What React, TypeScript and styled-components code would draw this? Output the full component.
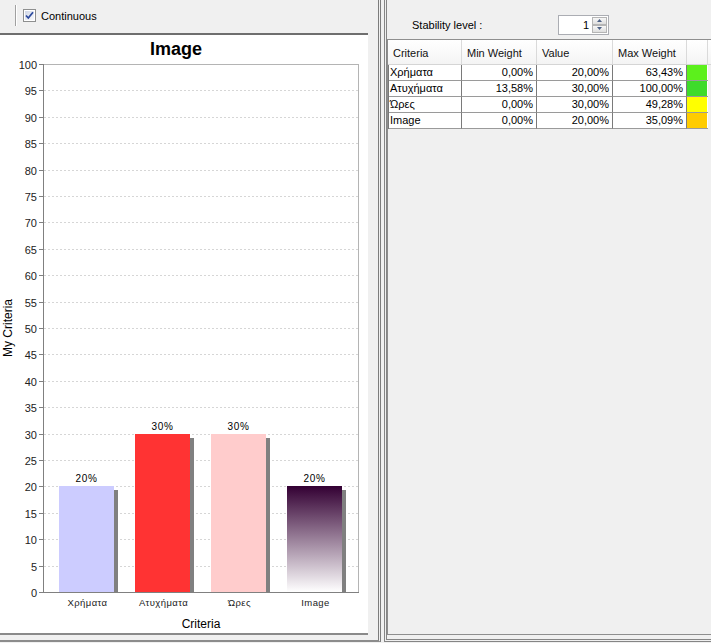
import React from "react";
import styled, { createGlobalStyle } from "styled-components";

const Global = createGlobalStyle`
  html, body { margin: 0; padding: 0; background: #f0f0f0; }
  body { font-family: "Liberation Sans", Arial, sans-serif; font-size: 11px; color: #000; }
  * { box-sizing: border-box; }
`;

const Window = styled.div`
  width: 711px;
  height: 643px;
  display: flex;
  overflow: hidden;
  background: #f0f0f0;
`;

const LeftPane = styled.div`
  width: 381px;
  height: 642px;
  flex: none;
  display: flex;
  flex-direction: column;
  border-right: 3px double #7c7c7c;
  border-bottom: 2px solid #8c8c8c;
  padding-bottom: 5px;
`;

const Toolbar = styled.div`
  height: 33px;
  flex: none;
  display: flex;
  align-items: center;
  padding-left: 15px;
  padding-bottom: 2px;
`;

const Separator = styled.div`
  width: 2px;
  height: 21px;
  border-left: 1px solid #a0a0a0;
  border-right: 1px solid #ffffff;
  margin-right: 6px;
`;

const CheckBox = styled.span`
  width: 13px;
  height: 13px;
  display: inline-block;
  margin-right: 5px;
  line-height: 0;
`;

const CheckLabel = styled.span`
  font-size: 11px;
`;

const ChartRow = styled.div`
  flex: 1;
  display: flex;
  padding-right: 10px;
`;

const ChartPanel = styled.div`
  width: 368px;
  background: #ffffff;
  border-top: 2px solid #6e6e6e;
  border-bottom: 2px solid #8a8a8a;
  line-height: 0;
`;

const RightPane = styled.div`
  width: 340px;
  flex: none;
  height: 642px;
  margin-left: 3px;
  display: flex;
  flex-direction: column;
  border-left: 3px double #858585;
  border-bottom: 3px double #858585;
  padding-bottom: 4px;
`;

const StabilityRow = styled.div`
  height: 39px;
  flex: none;
  display: flex;
  align-items: center;
  padding-top: 10px;
  padding-left: 25px;
`;

const StabilityLabel = styled.span`
  width: 146px;
  font-size: 11px;
`;

const Spinner = styled.div`
  width: 51px;
  height: 20px;
  background: #fff;
  border: 1px solid #abadb3;
  display: flex;
  align-items: stretch;
  padding: 1px 1px 1px 0;
`;

const SpinValue = styled.span`
  flex: 1;
  text-align: right;
  padding-right: 3px;
  line-height: 16px;
  font-size: 11px;
`;

const SpinButtons = styled.div`
  width: 15px;
  display: flex;
  flex-direction: column;
`;

const SpinButton = styled.div`
  flex: 1;
  border: 1px solid #b5b5b5;
  background: linear-gradient(#f7f7f7, #dedede);
  display: flex;
  align-items: center;
  justify-content: center;
  line-height: 0;
`;

const ScrollPane = styled.div`
  flex: 1;
  border: 1px solid #8e8e8e;
  background: #f0f0f0;
`;

const COLS = "74px 75px 76px 74px 21px";

const HeaderRow = styled.div`
  display: grid;
  grid-template-columns: ${COLS} 1fr;
  height: 25px;
  background: linear-gradient(#ffffff, #f4f4f4);
  border-bottom: 1px solid #d5d5d5;
`;

const HeadCell = styled.div`
  display: flex;
  align-items: center;
  padding-left: 5px;
  padding-top: 2px;
  border-right: 1px solid #dadada;
  font-size: 11px;
  color: #111;
`;

const Body = styled.div`
  width: 320px;
  border-left: 1px solid #7a7a7a;
`;

const Row = styled.div`
  display: grid;
  grid-template-columns: 73px 75px 76px 74px 21px;
  height: 16px;
`;

const Cell = styled.div<{ $right?: boolean }>`
  background: #fff;
  border-right: 1px solid #7a7a7a;
  border-bottom: 1px solid #9a9a9a;
  padding: 0 3px 0 1px;
  text-align: ${(p) => (p.$right ? "right" : "left")};
  line-height: 15px;
  font-size: 11px;
  white-space: nowrap;
  overflow: hidden;
`;

const SwatchCell = styled.div`
  background: #fff;
  border-bottom: 1px solid #9a9a9a;
  padding: 0 1px 0 0;
`;

const Swatch = styled.div<{ $color: string }>`
  width: 100%;
  height: 100%;
  background: ${(p) => p.$color};
`;

const rows = [
  { name: "Χρήματα", min: "0,00%", val: "20,00%", max: "63,43%", color: "#5cf01c" },
  { name: "Ατυχήματα", min: "13,58%", val: "30,00%", max: "100,00%", color: "#3edb2b" },
  { name: "Ώρες", min: "0,00%", val: "30,00%", max: "49,28%", color: "#ffff00" },
  { name: "Image", min: "0,00%", val: "20,00%", max: "35,09%", color: "#ffcc00" },
];

const bars = [
  { name: "Χρήματα", value: 20, x: 59, fill: "#ccccff" },
  { name: "Ατυχήματα", value: 30, x: 135, fill: "#ff3333" },
  { name: "Ώρες", value: 30, x: 211, fill: "#ffcccc" },
  { name: "Image", value: 20, x: 287, fill: "url(#imgGrad)" },
];

const PL = 43;
const PR = 358;
const PT = 29;
const PB = 557;
const yOf = (v: number) => PB - v * ((PB - PT) / 100);
const BW = 55;

function Chart() {
  const ticks = Array.from({ length: 21 }, (_, i) => i * 5);
  const ff = "'Liberation Sans', Arial, sans-serif";
  return (
    <svg width={368} height={598} viewBox="0 0 368 598" fontFamily={ff}>
      <defs>
        <linearGradient id="imgGrad" x1="0" y1="0" x2="0" y2="1">
          <stop offset="0" stopColor="#330033" />
          <stop offset="1" stopColor="#ffffff" />
        </linearGradient>
      </defs>
      <text x={176} y={20} textAnchor="middle" fontSize={18} fontWeight="bold" fill="#000">
        Image
      </text>
      {ticks.slice(1, 20).map((v) => (
        <line
          key={"g" + v}
          x1={PL + 1}
          x2={PR}
          y1={Math.round(yOf(v)) + 0.5}
          y2={Math.round(yOf(v)) + 0.5}
          stroke="#d6d6d6"
          strokeDasharray="2 2"
        />
      ))}
      <rect x={PL + 0.5} y={PT + 0.5} width={PR - PL} height={PB - PT} fill="none" stroke="#b4b4b4" />
      {bars.map((b) => {
        const top = Math.round(yOf(b.value));
        return (
          <g key={b.name}>
            <rect x={b.x + 4} y={top + 4} width={BW} height={PB - top - 4} fill="#808080" />
            <rect x={b.x} y={top} width={BW} height={PB - top} fill={b.fill} />
            <text x={b.x + BW / 2} y={top - 4} textAnchor="middle" fontSize={10} fill="#000" letterSpacing={0.6}>
              {b.value}%
            </text>
            <text x={b.x + BW / 2 + 1} y={571} textAnchor="middle" fontSize={9.5} fill="#222" letterSpacing={0.4}>
              {b.name}
            </text>
          </g>
        );
      })}
      <line x1={PL + 0.5} x2={PL + 0.5} y1={PT} y2={PB + 1} stroke="#808080" />
      <line x1={PL} x2={PR + 1} y1={PB + 0.5} y2={PB + 0.5} stroke="#808080" />
      {ticks.map((v) => {
        const y = Math.round(yOf(v)) + 0.5;
        return (
          <g key={"t" + v}>
            <line x1={PL - 4} x2={PL} y1={y} y2={y} stroke="#808080" />
            <text x={37} y={y + 4} textAnchor="end" fontSize={11} fill="#222">
              {v}
            </text>
          </g>
        );
      })}
      <text x={201} y={593} textAnchor="middle" fontSize={12} fill="#000">
        Criteria
      </text>
      <text x={12} y={293} textAnchor="middle" fontSize={12} fill="#000" transform="rotate(-90 12 293)">
        My Criteria
      </text>
    </svg>
  );
}

export default function App() {
  return (
    <>
      <Global />
      <Window>
        <LeftPane>
          <Toolbar>
            <Separator />
            <CheckBox>
              <svg width="13" height="13" viewBox="0 0 13 13">
                <defs>
                  <linearGradient id="cbg" x1="0" y1="0" x2="1" y2="1">
                    <stop offset="0" stopColor="#cfd6e6" />
                    <stop offset="1" stopColor="#f8f9fc" />
                  </linearGradient>
                </defs>
                <rect x="0.5" y="0.5" width="12" height="12" fill="#fff" stroke="#8e8f8f" />
                <rect x="2" y="2" width="9" height="9" fill="url(#cbg)" />
                <path d="M3 6.5 L5.3 9 L10 3.3" fill="none" stroke="#2c4a9e" strokeWidth="1.8" />
              </svg>
            </CheckBox>
            <CheckLabel>Continuous</CheckLabel>
          </Toolbar>
          <ChartRow>
            <ChartPanel>
              <Chart />
            </ChartPanel>
          </ChartRow>
        </LeftPane>
        <RightPane>
          <StabilityRow>
            <StabilityLabel>Stability level :</StabilityLabel>
            <Spinner>
              <SpinValue>1</SpinValue>
              <SpinButtons>
                <SpinButton>
                  <svg width="5" height="3" viewBox="0 0 5 3">
                    <path d="M0 3 L2.5 0 L5 3 Z" fill="#4d6185" />
                  </svg>
                </SpinButton>
                <SpinButton>
                  <svg width="5" height="3" viewBox="0 0 5 3">
                    <path d="M0 0 L2.5 3 L5 0 Z" fill="#4d6185" />
                  </svg>
                </SpinButton>
              </SpinButtons>
            </Spinner>
          </StabilityRow>
          <ScrollPane>
            <HeaderRow>
              <HeadCell>Criteria</HeadCell>
              <HeadCell>Min Weight</HeadCell>
              <HeadCell>Value</HeadCell>
              <HeadCell>Max Weight</HeadCell>
              <HeadCell />
              <HeadCell />
            </HeaderRow>
            <Body>
              {rows.map((r) => (
                <Row key={r.name}>
                  <Cell>{r.name}</Cell>
                  <Cell $right>{r.min}</Cell>
                  <Cell $right>{r.val}</Cell>
                  <Cell $right>{r.max}</Cell>
                  <SwatchCell>
                    <Swatch $color={r.color} />
                  </SwatchCell>
                </Row>
              ))}
            </Body>
          </ScrollPane>
        </RightPane>
      </Window>
    </>
  );
}
